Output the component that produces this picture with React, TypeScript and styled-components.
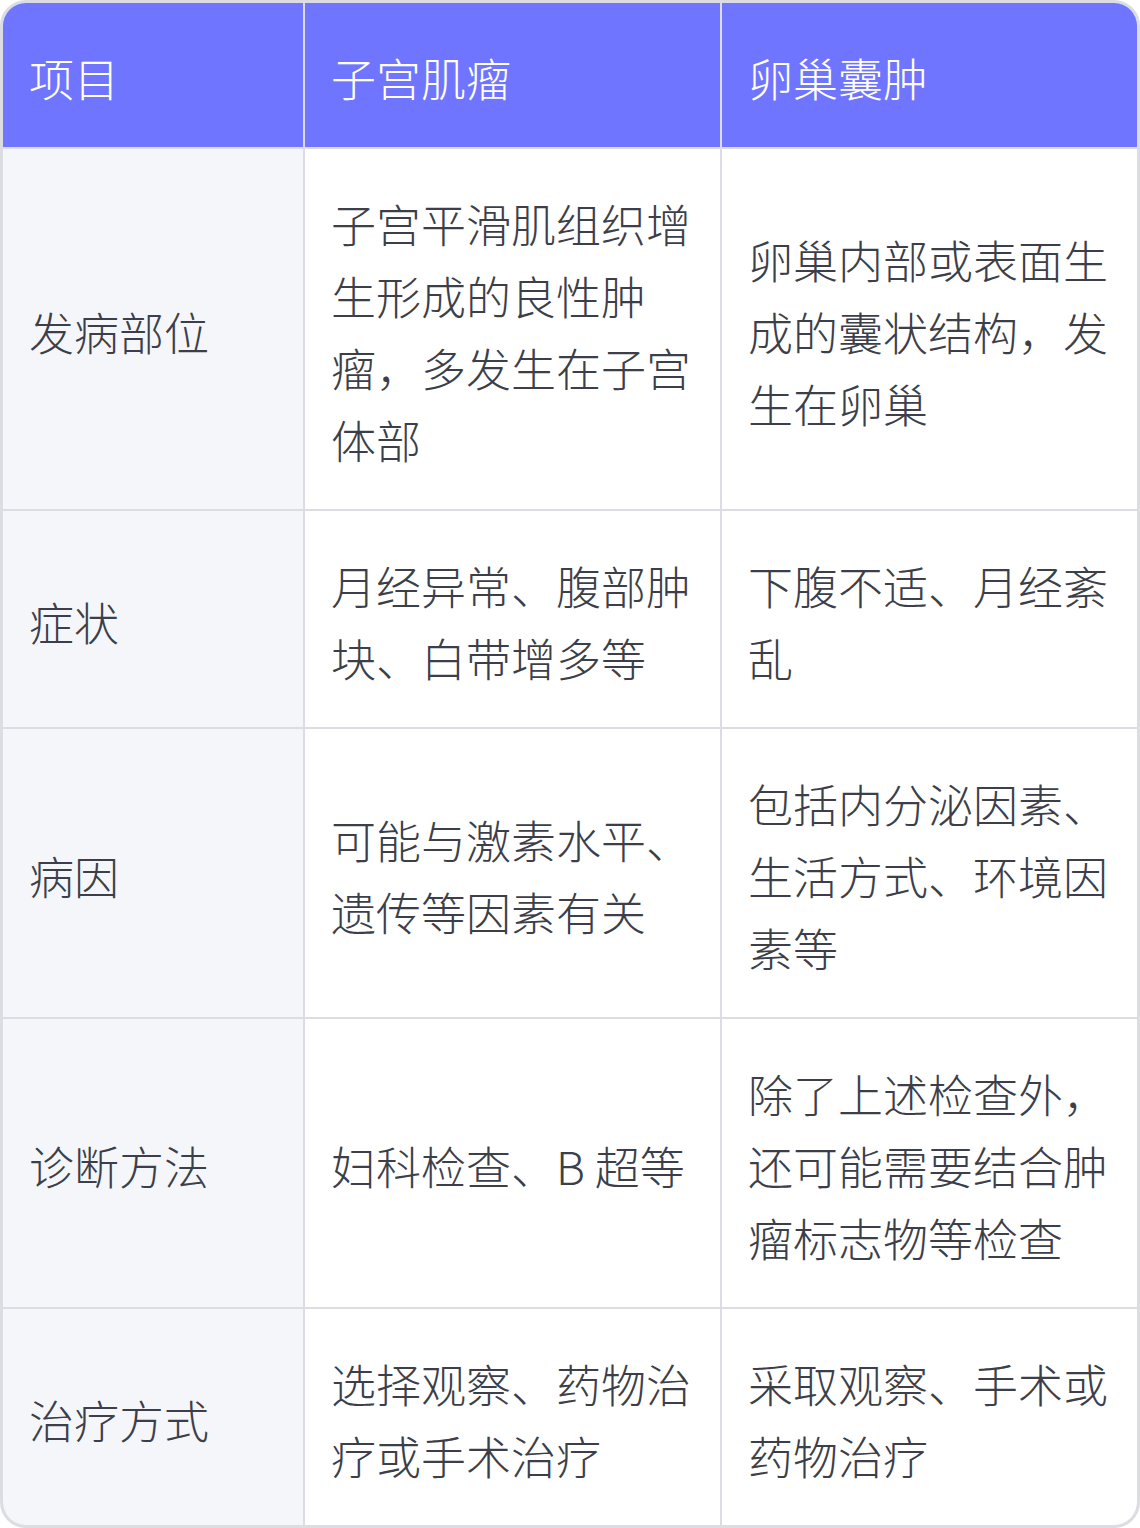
import React from 'react';
import styled, { createGlobalStyle } from 'styled-components';

const GlobalStyle = createGlobalStyle`
  html, body {
    margin: 0;
    padding: 0;
    background: #ffffff;
  }
  body {
    font-family: "Noto Sans CJK SC", "Noto Sans", sans-serif;
  }
`;

const rows: [string, string, string][] = [
  [
    '发病部位',
    '子宫平滑肌组织增生形成的良性肿瘤，多发生在子宫体部',
    '卵巢内部或表面生成的囊状结构，发生在卵巢',
  ],
  ['症状', '月经异常、腹部肿块、白带增多等', '下腹不适、月经紊乱'],
  ['病因', '可能与激素水平、遗传等因素有关', '包括内分泌因素、生活方式、环境因素等'],
  [
    '诊断方法',
    '妇科检查、B 超等',
    '除了上述检查外，还可能需要结合肿瘤标志物等检查',
  ],
  ['治疗方式', '选择观察、药物治疗或手术治疗', '采取观察、手术或药物治疗'],
];

function App(): JSX.Element {
  return (
    <>
      <GlobalStyle />
      <StyledTable>
        <StyledHeadCell>项目</StyledHeadCell>
        <StyledHeadCell>子宫肌瘤</StyledHeadCell>
        <StyledHeadCell>卵巢囊肿</StyledHeadCell>
        {rows.map(([label, a, b]) => (
          <React.Fragment key={label}>
            <StyledCell $label>{label}</StyledCell>
            <StyledCell>{a}</StyledCell>
            <StyledCell>{b}</StyledCell>
          </React.Fragment>
        ))}
      </StyledTable>
    </>
  );
}

export default App;

const StyledTable = styled.div`
  display: grid;
  grid-template-columns: 300px 415px 415px;
  gap: 2px;
  width: 1134px;
  border: 3px solid #dcdde3;
  border-radius: 26px;
  overflow: hidden;
  background-color: #dcdde3;
`;

const StyledBaseCell = styled.div`
  display: flex;
  align-items: center;
  padding: 39px 25px 33px 26px;
  font-size: 45px;
  line-height: 72px;
  font-weight: 300;
  word-break: break-all;
`;

const StyledHeadCell = styled(StyledBaseCell)`
  background-color: #7075ff;
  color: #ffffff;
`;

const StyledCell = styled(StyledBaseCell)<{ $label?: boolean }>`
  background-color: ${({ $label }) => ($label ? '#f5f6fa' : '#ffffff')};
  color: #3c3f4a;
`;
